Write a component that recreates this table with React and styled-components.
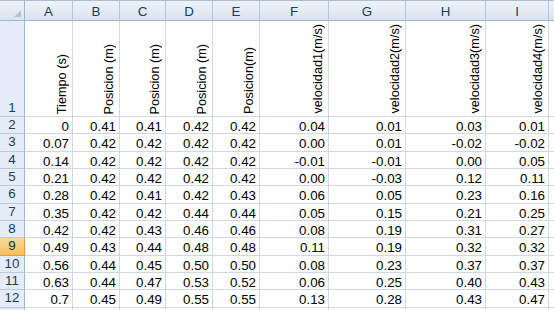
import React from "react";
import styled, { createGlobalStyle } from "styled-components";

const GlobalStyle = createGlobalStyle`
  * {
    box-sizing: border-box;
  }

  body {
    margin: 0;
    background: #fff;
    overflow: hidden;
  }
`;

const Sheet = styled.div`
  display: grid;
  grid-template-columns: 25px 48px 47px 46px 47px 47px 69px 77px 80px 63px 60px;
  grid-template-rows: 21px 96px repeat(13, 17.333px);
  width: max-content;
  font-family: "Liberation Sans", Arial, sans-serif;
  font-size: 13.33px;
  line-height: 1;
  color: #000;
`;

const Corner = styled.div`
  position: relative;
  background: linear-gradient(#eef3fa, #d9e3f0);
  border-top: 1px solid #a9bdd4;
  border-right: 1px solid #9eb6ce;
  border-bottom: 1px solid #9eb6ce;

  &::after {
    content: "";
    position: absolute;
    right: 3px;
    bottom: 3px;
    border-style: solid;
    border-width: 0 0 7px 7px;
    border-color: transparent transparent #b3c3d6 transparent;
  }
`;

const ColHeader = styled.div`
  display: flex;
  align-items: flex-end;
  justify-content: center;
  padding-bottom: 2px;
  background: linear-gradient(#eef3fa, #d9e3f0);
  border-top: 1px solid #a9bdd4;
  border-right: 1px solid #b4c6da;
  border-bottom: 1px solid #9eb6ce;
  color: #213a63;
`;

const RowHeader = styled.div`
  display: flex;
  align-items: flex-end;
  justify-content: center;
  padding-bottom: 2px;
  background: ${(p) =>
    p.$active ? "linear-gradient(#f9d99f, #f1c15f)" : "#e4ecf7"};
  border-right: 1px solid ${(p) => (p.$active ? "#f29536" : "#9eb6ce")};
  border-bottom: 1px solid ${(p) => (p.$active ? "#f29536" : "#b9cadd")};
  color: ${(p) => (p.$active ? "#1c2a45" : "#213a63")};
`;

const Cell = styled.div`
  display: flex;
  align-items: flex-end;
  justify-content: flex-end;
  padding: 0 3px 0 0;
  border-right: 1px solid #d0d7e5;
  border-bottom: 1px solid #d0d7e5;
  white-space: nowrap;
  overflow: hidden;
`;

const LabelCell = styled(Cell)`
  padding: 0 3px 2px 0;
`;

const VerticalLabel = styled.span`
  writing-mode: vertical-rl;
  transform: rotate(180deg);
  font-size: 12.7px;
  line-height: 14px;
`;

const columns = ["A", "B", "C", "D", "E", "F", "G", "H", "I", ""];

const labels = [
  "Tiempo (s)",
  "Posicion (m)",
  "Posicion (m)",
  "Posicion (m)",
  "Posicion(m)",
  "velocidad1(m/s)",
  "velocidad2(m/s)",
  "velocidad3(m/s)",
  "velocidad4(m/s)",
  "",
];

const rows = [
  ["0", "0.41", "0.41", "0.42", "0.42", "0.04", "0.01", "0.03", "0.01"],
  ["0.07", "0.42", "0.42", "0.42", "0.42", "0.00", "0.01", "-0.02", "-0.02"],
  ["0.14", "0.42", "0.42", "0.42", "0.42", "-0.01", "-0.01", "0.00", "0.05"],
  ["0.21", "0.42", "0.42", "0.42", "0.42", "0.00", "-0.03", "0.12", "0.11"],
  ["0.28", "0.42", "0.41", "0.42", "0.43", "0.06", "0.05", "0.23", "0.16"],
  ["0.35", "0.42", "0.42", "0.44", "0.44", "0.05", "0.15", "0.21", "0.25"],
  ["0.42", "0.42", "0.43", "0.46", "0.46", "0.08", "0.19", "0.31", "0.27"],
  ["0.49", "0.43", "0.44", "0.48", "0.48", "0.11", "0.19", "0.32", "0.32"],
  ["0.56", "0.44", "0.45", "0.50", "0.50", "0.08", "0.23", "0.37", "0.37"],
  ["0.63", "0.44", "0.47", "0.53", "0.52", "0.06", "0.25", "0.40", "0.43"],
  ["0.7", "0.45", "0.49", "0.55", "0.55", "0.13", "0.28", "0.43", "0.47"],
  ["0.77", "0.46", "0.51", "0.58", "0.58", "0.11", "0.30", "0.38", "0.50"],
];

const App = () => {
  return (
    <>
      <GlobalStyle />
      <Sheet>
        {/* column letters */}
        <Corner />
        {columns.map((c, i) => (
          <ColHeader key={"h" + i}>{c}</ColHeader>
        ))}

        {/* row 1, rotated titles */}
        <RowHeader>1</RowHeader>
        {labels.map((l, i) => (
          <LabelCell key={"l" + i}>
            <VerticalLabel>{l}</VerticalLabel>
          </LabelCell>
        ))}

        {/* data rows */}
        {rows.map((r, ri) => (
          <React.Fragment key={"r" + ri}>
            <RowHeader $active={ri + 2 === 9}>{ri + 2}</RowHeader>
            {r.map((v, ci) => (
              <Cell key={ci}>{v}</Cell>
            ))}
            <Cell />
          </React.Fragment>
        ))}
      </Sheet>
    </>
  );
};

export default App;
